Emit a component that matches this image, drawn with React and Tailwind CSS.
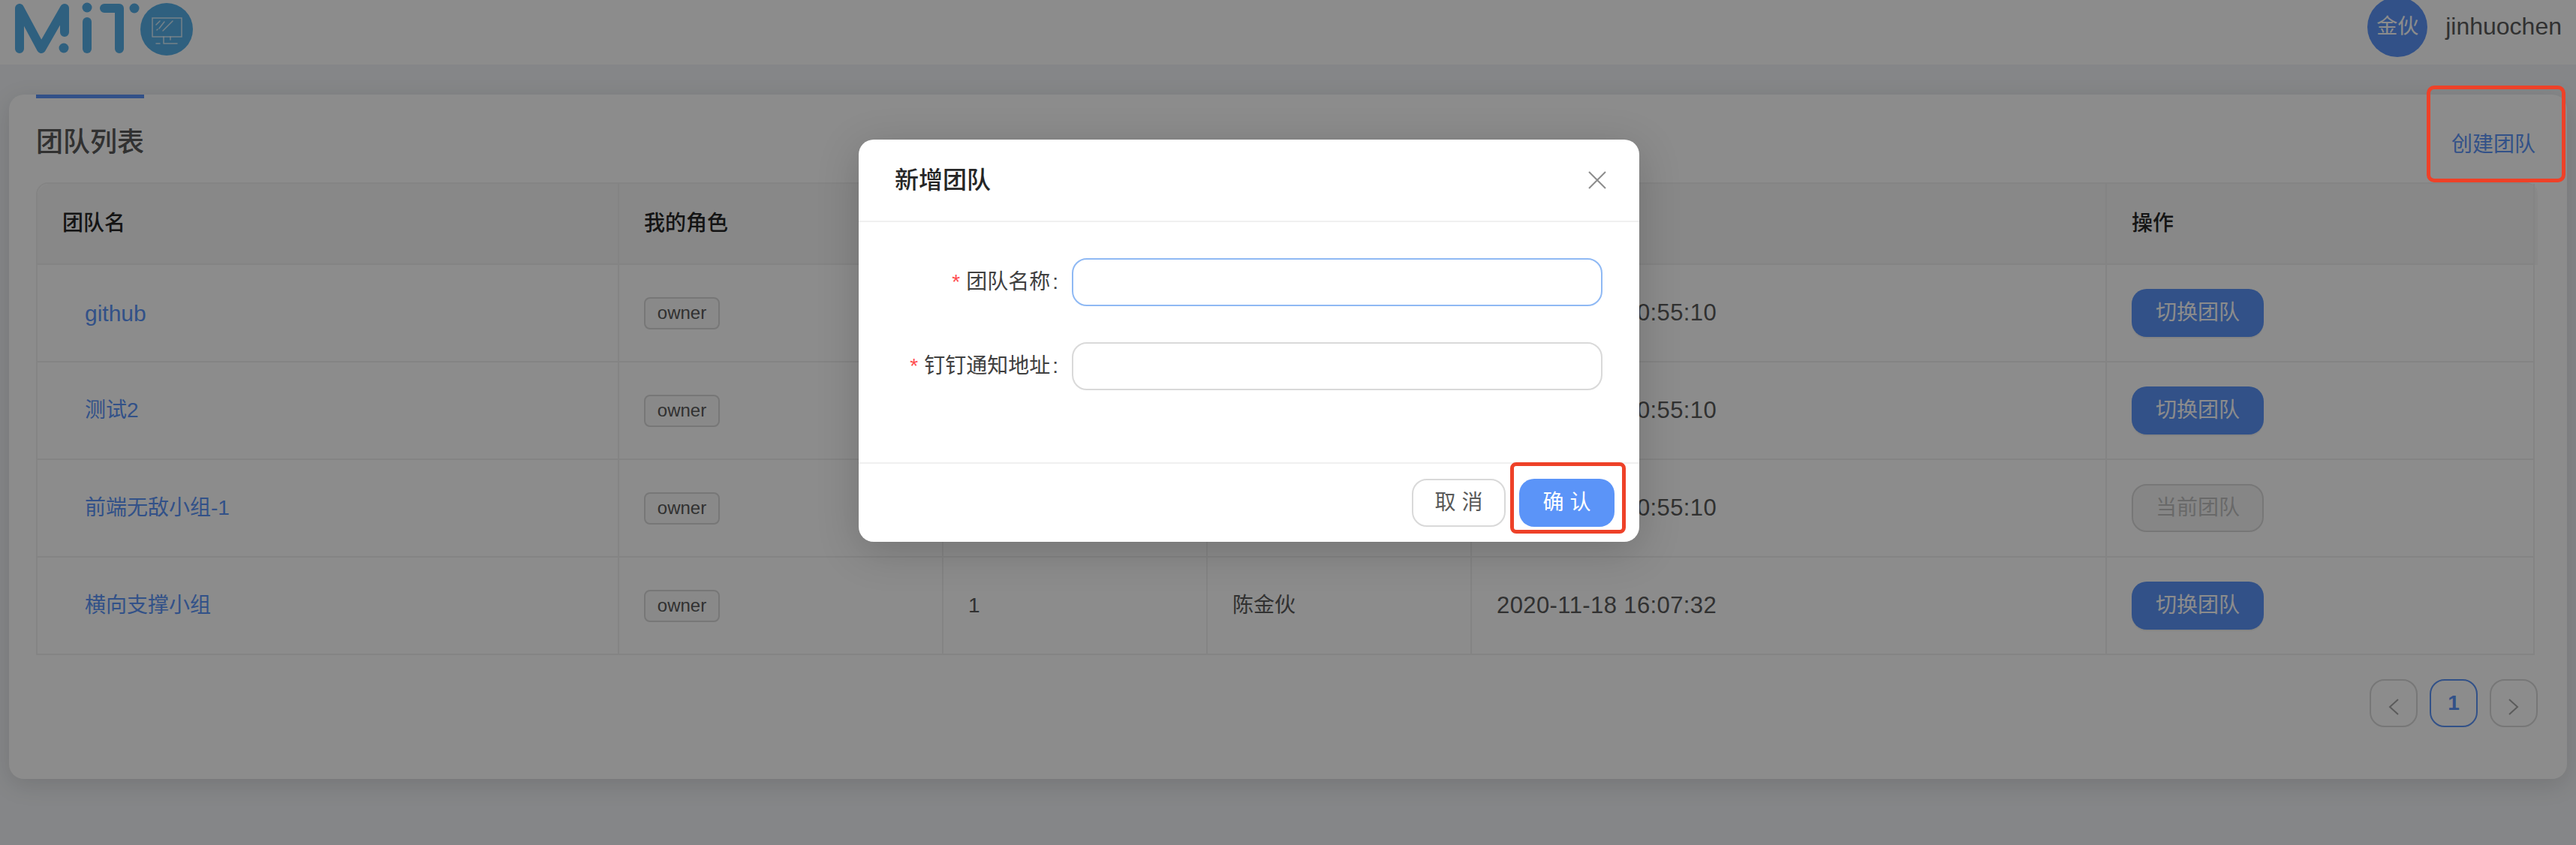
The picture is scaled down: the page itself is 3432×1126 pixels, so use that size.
import React from 'react';

const font = { fontFamily: '"Liberation Sans", "Noto Sans CJK SC", sans-serif' };

const teams = [
  { name: 'github', latin: true, time: '2020-11-18 10:55:10', current: false },
  { name: '测试2', time: '2020-11-18 10:55:10', current: false },
  { name: '前端无敌小组-1', time: '2020-11-18 10:55:10', current: true },
  { name: '横向支撑小组', time: '2020-11-18 16:07:32', current: false },
];

const cols = 'grid grid-cols-[775px_432px_352px_352px_846px_570px]';
const cell = 'flex items-center border-r-2 border-b-2 border-[#f0f0f0]';

function Logo() {
  return (
    <svg className="w-[270px] h-[86px] shrink-0" viewBox="0 0 270 86" fill="none">
      <g stroke="#57b0e8" strokeWidth="12" strokeLinecap="round" strokeLinejoin="round">
        <path d="M26 11 V65 M26 11 L55 65 L86 11 V43" />
        <path d="M116 29 V65" />
        <path d="M139 11 H159 V65" />
      </g>
      <g fill="#57b0e8">
        <circle cx="85" cy="64" r="6.5" />
        <circle cx="116" cy="10" r="6.5" />
        <circle cx="179" cy="11" r="6.5" />
        <circle cx="222" cy="39" r="35" />
      </g>
      <g stroke="#ffffff" strokeOpacity="0.75" strokeWidth="1.5" strokeLinecap="round">
        <path d="M203 49 V24 H242 V49 H203" />
        <path d="M218 49 V58 M227 49 V53 M218 58 H236 M208 58 H213" />
        <path d="M208 33 L213 28 M212 38 L219 29 M217 41 L230 28 M209 40 L210 39" />
      </g>
    </svg>
  );
}

function Chevron({ points }) {
  return (
    <svg className="w-[16px] h-[22px] mt-[9px]" viewBox="0 0 16 22" fill="none">
      <polyline points={points} stroke="#a6a6a6" strokeWidth="2" />
    </svg>
  );
}

function Label({ children }) {
  return (
    <div className="w-[268px] flex items-center justify-end text-[28px] text-[#404040]">
      <span className="text-[#ff4d4f] mr-[8px]">*</span>
      <span>{children}</span>
      <span className="ml-[3px] mr-[2px]">:</span>
    </div>
  );
}

export default function App() {
  return (
    <div className="relative w-[3432px] h-[1126px] overflow-hidden bg-[#f2f4f7]" style={font}>
      {/* Header */}
      <div className="h-[86px] bg-white flex justify-between items-start overflow-hidden">
        <Logo />
        <div className="flex items-center gap-[24px] pr-[19px] -mt-[4px]">
          <div className="w-[80px] h-[80px] rounded-full bg-[#5b94f8] text-white text-[28px] flex items-center justify-center">
            金伙
          </div>
          <span className="text-[32px] text-[#595959] -mt-[2px]">jinhuochen</span>
        </div>
      </div>

      {/* Page */}
      <div className="pt-[40px] px-[12px]">
        <div className="relative h-[912px] bg-white rounded-[20px] pl-[36px] pr-[39px] shadow-[0_8px_32px_rgba(0,0,0,0.12)]">
          <div className="absolute left-[36px] top-0 w-[144px] h-[5px] bg-[#5b94f8]" />
          <div className="h-[117px] flex justify-between items-center pt-[11px]">
            <h1 className="text-[36px] font-medium text-[#595959]">团队列表</h1>
            <a className="text-[28px] text-[#5b94f8] mt-[6px] mr-[3px]">创建团队</a>
          </div>

          {/* Table */}
          <div className="rounded-t-[16px] border-l-2 border-t-2 border-[#f0f0f0]">
            <div className={`${cols} h-[108px] bg-[#f8f8f8] rounded-t-[16px] text-[28px] font-medium text-[#262626]`}>
              <div className={`${cell} pl-[33px]`}>团队名</div>
              <div className={`${cell} pl-[33px]`}>我的角色</div>
              <div className={`${cell} pl-[33px]`}>成员数</div>
              <div className={`${cell} pl-[33px]`}>创建人</div>
              <div className={`${cell} pl-[33px]`}>创建时间</div>
              <div className={`${cell} pl-[33px]`}>操作</div>
            </div>
            {teams.map((team) => (
              <div key={team.name} className={`${cols} h-[130px] text-[28px] text-[#595959]`}>
                <div className={`${cell} pl-[63px]`}>
                  <a className={`text-[#5b94f8] ${team.latin ? 'text-[30px]' : 'text-[28px]'}`}>{team.name}</a>
                </div>
                <div className={`${cell} pl-[33px]`}>
                  <span className="w-[101px] h-[43px] rounded-[8px] border-2 border-[#d9d9d9] bg-[#fafafa] text-[24px] flex items-center justify-center">
                    owner
                  </span>
                </div>
                <div className={`${cell} pl-[33px]`}>1</div>
                <div className={`${cell} pl-[33px]`}>陈金伙</div>
                <div className={`${cell} pl-[33px] text-[31px] tracking-[0.4px]`}>{team.time}</div>
                <div className={`${cell} pl-[33px]`}>
                  {team.current ? (
                    <button className="w-[176px] h-[64px] rounded-[20px] border-2 border-[#d9d9d9] bg-[#f5f5f5] text-[#bfbfbf] text-[28px]">
                      当前团队
                    </button>
                  ) : (
                    <button className="w-[176px] h-[64px] rounded-[20px] bg-[#5b94f8] text-white text-[28px] shadow-[0_2px_0_rgba(0,0,0,0.05)]">
                      切换团队
                    </button>
                  )}
                </div>
              </div>
            ))}
          </div>

          {/* Pagination */}
          <div className="mt-[32px] flex justify-end gap-[16px]">
            <div className="w-[64px] h-[64px] rounded-[20px] border-2 border-[#d9d9d9] flex items-center justify-center">
              <Chevron points="14,1 3,11 14,21" />
            </div>
            <div className="w-[64px] h-[64px] rounded-[20px] border-2 border-[#5b94f8] text-[#5b94f8] text-[28px] font-bold flex items-center justify-center">
              1
            </div>
            <div className="w-[64px] h-[64px] rounded-[20px] border-2 border-[#d9d9d9] flex items-center justify-center">
              <Chevron points="2,1 13,11 2,21" />
            </div>
          </div>
        </div>
      </div>

      {/* Mask */}
      <div className="absolute inset-0 bg-black/45" />

      {/* Modal */}
      <div className="absolute left-[1144px] top-[186px] w-[1040px] h-[536px] bg-white rounded-[20px] flex flex-col shadow-[0_12px_56px_rgba(0,0,0,0.18)]">
        <div className="h-[110px] shrink-0 border-b-2 border-[#f0f0f0] pl-[48px] pr-[43px] flex items-center justify-between">
          <span className="text-[32px] font-medium text-[#262626]">新增团队</span>
          <svg className="w-[26px] h-[26px]" viewBox="0 0 26 26" fill="none">
            <path d="M2 2 L24 24 M24 2 L2 24" stroke="#8c8c8c" strokeWidth="2" />
          </svg>
        </div>
        <div className="flex-1 pt-[48px] flex flex-col gap-[48px]">
          <div className="flex h-[64px]">
            <Label>团队名称</Label>
            <input className="ml-[16px] w-[707px] h-[64px] rounded-[20px] border-2 border-[#8fb9f4] bg-white outline-none" />
          </div>
          <div className="flex h-[64px]">
            <Label>钉钉通知地址</Label>
            <input className="ml-[16px] w-[707px] h-[64px] rounded-[20px] border-2 border-[#d9d9d9] bg-white outline-none" />
          </div>
        </div>
        <div className="h-[106px] shrink-0 border-t-2 border-[#f0f0f0] pr-[33px] flex items-center justify-end gap-[18px]">
          <button className="w-[125px] h-[64px] rounded-[20px] border-2 border-[#d9d9d9] bg-white text-[28px] text-[#595959]">
            取 消
          </button>
          <button className="w-[127px] h-[64px] rounded-[20px] bg-[#5b94f8] text-[28px] text-white">
            确 认
          </button>
        </div>
      </div>

      {/* Annotation boxes */}
      <div className="absolute left-[3233px] top-[114px] w-[185px] h-[129px] rounded-[10px] border-[5px] border-[#ee4128]" />
      <div className="absolute left-[2012px] top-[616px] w-[154px] h-[95px] rounded-[8px] border-[5px] border-[#ee4128]" />
    </div>
  );
}
